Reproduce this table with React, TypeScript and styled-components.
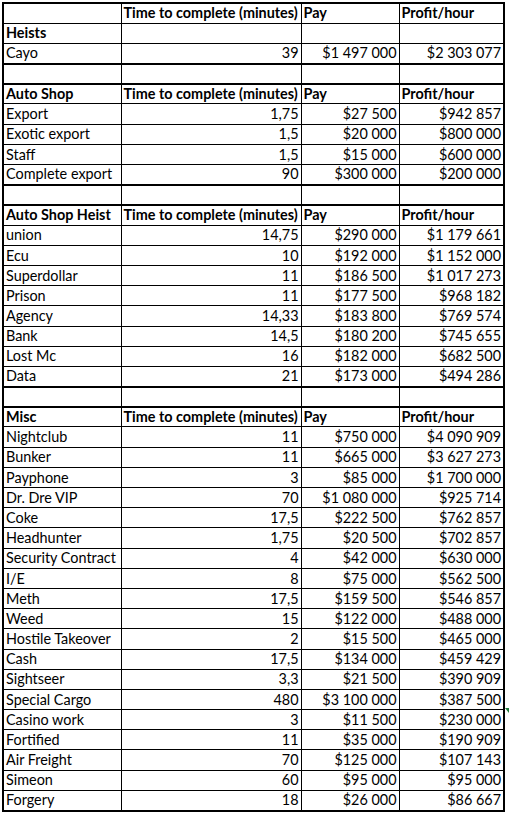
import React from "react";
import styled, { createGlobalStyle } from "styled-components";

const GlobalStyle = createGlobalStyle`
  html, body {
    margin: 0;
    padding: 0;
    background: #ffffff;
  }
  body {
    font-family: "Lato", "Open Sans", sans-serif;
    color: #000;
  }
`;

type Row = [string, string, string, string];

type Section = {
  title: string;
  rows: Row[];
};

const HEAD = ["Time to complete (minutes)", "Pay", "Profit/hour"];

const sections: Section[] = [
  {
    title: "",
    rows: [
      ["Heists", "", "", ""],
      ["Cayo", "39", "$1 497 000", "$2 303 077"],
    ],
  },
  {
    title: "Auto Shop",
    rows: [
      ["Export", "1,75", "$27 500", "$942 857"],
      ["Exotic export", "1,5", "$20 000", "$800 000"],
      ["Staff", "1,5", "$15 000", "$600 000"],
      ["Complete export", "90", "$300 000", "$200 000"],
    ],
  },
  {
    title: "Auto Shop Heist",
    rows: [
      ["union", "14,75", "$290 000", "$1 179 661"],
      ["Ecu", "10", "$192 000", "$1 152 000"],
      ["Superdollar", "11", "$186 500", "$1 017 273"],
      ["Prison", "11", "$177 500", "$968 182"],
      ["Agency", "14,33", "$183 800", "$769 574"],
      ["Bank", "14,5", "$180 200", "$745 655"],
      ["Lost Mc", "16", "$182 000", "$682 500"],
      ["Data", "21", "$173 000", "$494 286"],
    ],
  },
  {
    title: "Misc",
    rows: [
      ["Nightclub", "11", "$750 000", "$4 090 909"],
      ["Bunker", "11", "$665 000", "$3 627 273"],
      ["Payphone", "3", "$85 000", "$1 700 000"],
      ["Dr. Dre VIP", "70", "$1 080 000", "$925 714"],
      ["Coke", "17,5", "$222 500", "$762 857"],
      ["Headhunter", "1,75", "$20 500", "$702 857"],
      ["Security Contract", "4", "$42 000", "$630 000"],
      ["I/E", "8", "$75 000", "$562 500"],
      ["Meth", "17,5", "$159 500", "$546 857"],
      ["Weed", "15", "$122 000", "$488 000"],
      ["Hostile Takeover", "2", "$15 500", "$465 000"],
      ["Cash", "17,5", "$134 000", "$459 429"],
      ["Sightseer", "3,3", "$21 500", "$390 909"],
      ["Special Cargo", "480", "$3 100 000", "$387 500"],
      ["Casino work", "3", "$11 500", "$230 000"],
      ["Fortified", "11", "$35 000", "$190 909"],
      ["Air Freight", "70", "$125 000", "$107 143"],
      ["Simeon", "60", "$95 000", "$95 000"],
      ["Forgery", "18", "$26 000", "$86 667"],
    ],
  },
];

const Page = styled.div`
  position: relative;
  padding: 2px 0 0 2px;
  width: 509px;
  height: 813px;
  box-sizing: border-box;
  overflow: hidden;
`;

const Sheet = styled.table`
  border-collapse: collapse;
  table-layout: fixed;
  width: 503px;
  border: 2px solid #000;
  font-size: 14.4px;
  line-height: 1;
`;

const Block = styled.tbody`
  border: 2px solid #000;
`;

const Line = styled.tr`
  height: 20.2px;
`;

const Cell = styled.td<{ $num?: boolean; $bold?: boolean }>`
  border: 1px solid #000;
  padding: 0 2px 2px 2px;
  text-align: ${({ $num }) => ($num ? "right" : "left")};
  font-weight: ${({ $bold }) => ($bold ? 700 : 400)};
  white-space: nowrap;
  overflow: hidden;
  vertical-align: bottom;
`;

const FillHandle = styled.div`
  position: absolute;
  left: 505px;
  top: 708px;
  width: 0;
  height: 0;
  border-left: 4px solid transparent;
  border-top: 5px solid #1f7a3a;
`;

function HeadRow({ title }: { title: string }) {
  return (
    <Line>
      <Cell $bold>{title}</Cell>
      {HEAD.map((h) => (
        <Cell key={h} $bold>
          {h}
        </Cell>
      ))}
    </Line>
  );
}

function Blank() {
  return (
    <tbody>
      <Line>
        <Cell />
        <Cell />
        <Cell />
        <Cell />
      </Line>
    </tbody>
  );
}

export default function App() {
  return (
    <Page>
      <GlobalStyle />
      <Sheet>
        <colgroup>
          <col style={{ width: 118 }} />
          <col style={{ width: 180 }} />
          <col style={{ width: 98 }} />
          <col style={{ width: 105 }} />
        </colgroup>
        {sections.map((s, i) => (
          <React.Fragment key={i}>
            {i > 0 && <Blank />}
            <Block>
              <HeadRow title={s.title} />
              {s.rows.map((r) => (
                <Line key={r[0]}>
                  <Cell $bold={r[0] === "Heists"}>{r[0]}</Cell>
                  <Cell $num>{r[1]}</Cell>
                  <Cell $num>{r[2]}</Cell>
                  <Cell $num>{r[3]}</Cell>
                </Line>
              ))}
            </Block>
          </React.Fragment>
        ))}
      </Sheet>
      <FillHandle />
    </Page>
  );
}
